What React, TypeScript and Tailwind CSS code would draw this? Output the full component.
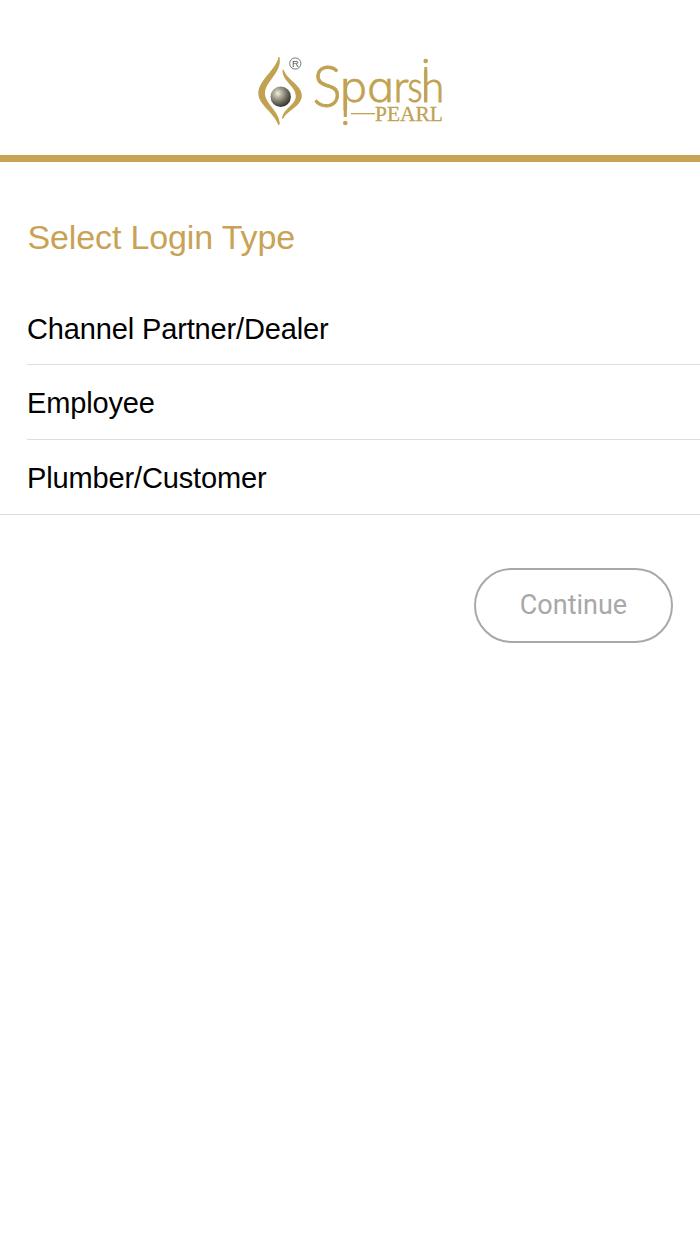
const loginTypes = ['Channel Partner/Dealer', 'Employee', 'Plumber/Customer'];

function Logo() {
  return (
    <svg width="190" height="76" viewBox="255 52 190 76" role="img" aria-label="Sparsh Pearl">
      <defs>
        <radialGradient id="pearl" cx="0.36" cy="0.34" r="0.68">
          <stop offset="0" stopColor="#f1efe6" />
          <stop offset="0.25" stopColor="#bdb9a8" />
          <stop offset="0.6" stopColor="#7b786b" />
          <stop offset="1" stopColor="#35362f" />
        </radialGradient>
      </defs>
      <g fill="#c1a252">
        <path d="M278.500 57C276 70 258.300 80 258.300 93.500C258.300 105 274 112 278.500 125.500L279.800 124C279.500 111 265 104 265 93.500C265 81 282.500 73 279.500 57Z" />
        <path d="M282.600 69.500C281.500 81 295.800 86 295.800 96C295.800 105 281.500 110 282.200 119.300L283.500 118C287 111 301.800 106 301.800 95.500C301.800 85 287 80 283.800 70Z" />
      </g>
      <circle cx="280.700" cy="96.700" r="10.200" fill="url(#pearl)" />
      <circle cx="295.300" cy="63.500" r="5.600" fill="none" stroke="#666" strokeWidth="0.9" />
      <text x="291.900" y="66.900" fill="#555" className="font-['Liberation_Sans'] text-[9.5px]">R</text>
      <g fill="#c1a252">
        <g stroke="#c1a252" strokeWidth="0.9" className="font-['Lato',sans-serif] font-light">
          <text transform="translate(312.600 106.700) scale(0.94 1)" className="text-[58px]">S</text>
          {/* stretched so the bowls of p and a come out round */}
          <text transform="scale(1.1 1)" strokeWidth="0.3" className="font-['Inter',sans-serif] text-[41px] [font-feature-settings:'cv11']">
            <tspan x="309.200" y="101.700">p</tspan>
            <tspan x="333.600" y="101.700">a</tspan>
          </text>
          <text x="393.500" y="101.500" className="text-[43px]">r</text>
          <text transform="translate(407.500 101.500) scale(0.82 1)" className="text-[43px]">s</text>
          <text transform="translate(421.200 101.500) scale(0.95 1)" className="text-[44px]">h</text>
        </g>
        <rect x="343.700" y="79" width="3.200" height="38" />
        <rect x="424.300" y="67" width="2.900" height="34.500" />
        <circle cx="345.300" cy="123" r="2.300" />
        <circle cx="425.700" cy="61" r="2.300" />
        <rect x="351" y="113" width="24" height="1.300" />
        <text x="375" y="121.300" stroke="#c1a252" strokeWidth="0.3" className="font-['Liberation_Serif'] text-[22px]" textLength="68" lengthAdjust="spacingAndGlyphs">PEARL</text>
      </g>
    </svg>
  );
}

export default function App() {
  return (
    <main className="min-h-screen bg-white font-['Liberation_Sans',Arial,sans-serif]">
      <header className="flex h-[162px] justify-center border-b-[7px] border-[#c8a355] pt-[52px]">
        <Logo />
      </header>

      <h1 className="mt-[55px] ml-[27.5px] text-[34px] leading-[40px] tracking-[-0.13px] text-[#c8a355]">Select Login Type</h1>

      <ul className="mt-[33px] border-b border-[#dedede]">
        {loginTypes.map((type) => (
          <li key={type} className="group ml-[27px] border-b border-[#dedede] last:border-b-0">
            <button className="block h-[74px] w-full pt-[3px] text-left text-[29px] tracking-[-0.14px] text-black group-first:pt-[5px]">{type}</button>
          </li>
        ))}
      </ul>

      <div className="mt-[53px] flex justify-end pr-[27px]">
        <button className="h-[75px] w-[199px] rounded-full border-2 border-[#a8a8a8] font-['Roboto',sans-serif] text-[27px] text-[#a8a8a8]">
          Continue
        </button>
      </div>
    </main>
  );
}
